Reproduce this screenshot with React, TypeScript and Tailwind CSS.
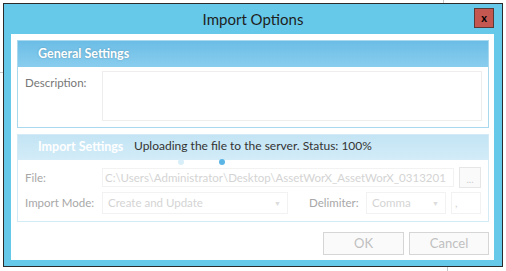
import React from "react";

const font = { fontFamily: 'Lato, "Noto Sans", sans-serif' };

export default function App() {
  return (
    <div className="relative w-[506px] h-[271px] bg-white overflow-hidden" style={font}>
      {/* background lines behind window */}
      <div className="absolute left-[443px] top-0 w-px h-[4px] bg-[#c8c8c8]" />
      <div className="absolute left-[447px] top-[267px] w-px h-[4px] bg-[#c8c8c8]" />
      <div className="absolute left-0 top-[72px] w-[3px] h-px bg-[#c8c8c8]" />

      <div className="absolute left-[3px] top-[3px] w-[500px] h-[264px] border border-[#2b2b2b] bg-[#66c9ea] flex flex-col">
        {/* title bar */}
        <div className="relative h-[30px] shrink-0 flex items-center justify-center">
          <span className="text-[15px] text-[#1e1e1e] leading-none">Import Options</span>
          <div className="absolute left-[470px] top-[4px] w-[20px] h-[20px] bg-[#c4574f] border border-[#5b3a37] flex items-center justify-center">
            <span className="text-[11px] font-bold text-black leading-none -mt-[2px]">x</span>
          </div>
        </div>
        {/* content */}
        <div className="ml-[7px] mr-[8px] mb-[6px] flex-1 bg-white pl-[6px] pr-[5px] pt-[6px] flex flex-col">
          {/* General Settings */}
          <div className="border border-[#a9d9ef] flex flex-col h-[88px]">
            <div className="h-[26px] shrink-0 bg-gradient-to-b from-[#6bbde6] to-[#89cdee] flex items-center pl-[20px]">
              <span className="text-[12.5px] font-bold text-white leading-none [text-shadow:0_0_2px_rgba(0,0,0,0.25)]">General Settings</span>
            </div>
            <div className="flex pt-[4px] pl-[7px] pr-[6px]">
              <div className="w-[77px] text-[11.5px] text-[#777] pt-[3px]">Description:</div>
              <div className="flex-1 h-[50px] border border-[#eeeeee]" />
            </div>
          </div>
          {/* Import Settings */}
          <div className="relative mt-[6px] border border-[#d2ebf7] flex flex-col h-[88px]">
            <div className="h-[25px] shrink-0 bg-gradient-to-b from-[#c3e4f4] to-[#d3ecf8] flex items-center pl-[20px]">
              <span className="text-[12.5px] font-bold text-white leading-none">Import Settings</span>
            </div>
            <div className="flex flex-col pl-[7px] pr-[6px] pt-[8px] gap-[5px]">
              <div className="flex items-center h-[19px]">
                <div className="w-[77px] shrink-0 text-[11.5px] text-[#a8a8a8] whitespace-nowrap">File:</div>
                <div className="w-[352px] shrink-0 h-[19px] border border-[#f2f2f2] text-[11.5px] text-[#d4d4d4] pl-[2px] leading-[17px] overflow-hidden whitespace-nowrap">C:\Users\Administrator\Desktop\AssetWorX_AssetWorX_0313201</div>
                <div className="ml-[5px] shrink-0 w-[22px] h-[21px] border border-[#e6e6e6] bg-[#fafafa] text-[10px] text-[#cccccc] flex items-end justify-center pb-[3px] leading-none">...</div>
              </div>
              <div className="flex items-center h-[22px]">
                <div className="w-[77px] shrink-0 text-[11.5px] text-[#a8a8a8] whitespace-nowrap">Import Mode:</div>
                <div className="w-[186px] shrink-0 h-[22px] border border-[#f2f2f2] text-[11.5px] text-[#d4d4d4] pl-[5px] flex items-center justify-between pr-[6px]">
                  <span>Create and Update</span>
                  <span className="text-[7px] text-[#dcdcdc]">▼</span>
                </div>
                <div className="ml-[21px] shrink-0 w-[57px] text-[11.5px] text-[#a8a8a8] whitespace-nowrap">Delimiter:</div>
                <div className="w-[80px] shrink-0 h-[22px] border border-[#f2f2f2] text-[11.5px] text-[#d4d4d4] pl-[5px] flex items-center justify-between pr-[6px]">
                  <span>Comma</span>
                  <span className="text-[7px] text-[#dcdcdc]">▼</span>
                </div>
                <div className="ml-[5px] shrink-0 w-[30px] h-[22px] border border-[#f2f2f2] text-[11.5px] text-[#d4d4d4] pl-[3px] flex items-center">,</div>
              </div>
            </div>
            {/* overlay message */}
            <div className="absolute left-[116px] top-[5px] text-[12px] text-[#333] leading-none whitespace-nowrap">Uploading the file to the server. Status: 100%</div>
            <div className="absolute left-[160px] top-[24px] w-[6px] h-[6px] rounded-full bg-[#d8eef9]" />
            <div className="absolute left-[201px] top-[24px] w-[6px] h-[6px] rounded-full bg-[#5bb6e6]" />
          </div>
          {/* buttons */}
          <div className="flex justify-end mt-[10px] gap-[5px]">
            <div className="w-[81px] h-[23px] border border-[#d6d6d6] bg-[#fafafa] text-[13px] text-[#c0c0c0] flex items-center justify-center">OK</div>
            <div className="w-[80px] h-[23px] border border-[#d6d6d6] bg-[#fafafa] text-[13px] text-[#c0c0c0] flex items-center justify-center">Cancel</div>
          </div>
        </div>
      </div>
    </div>
  );
}
